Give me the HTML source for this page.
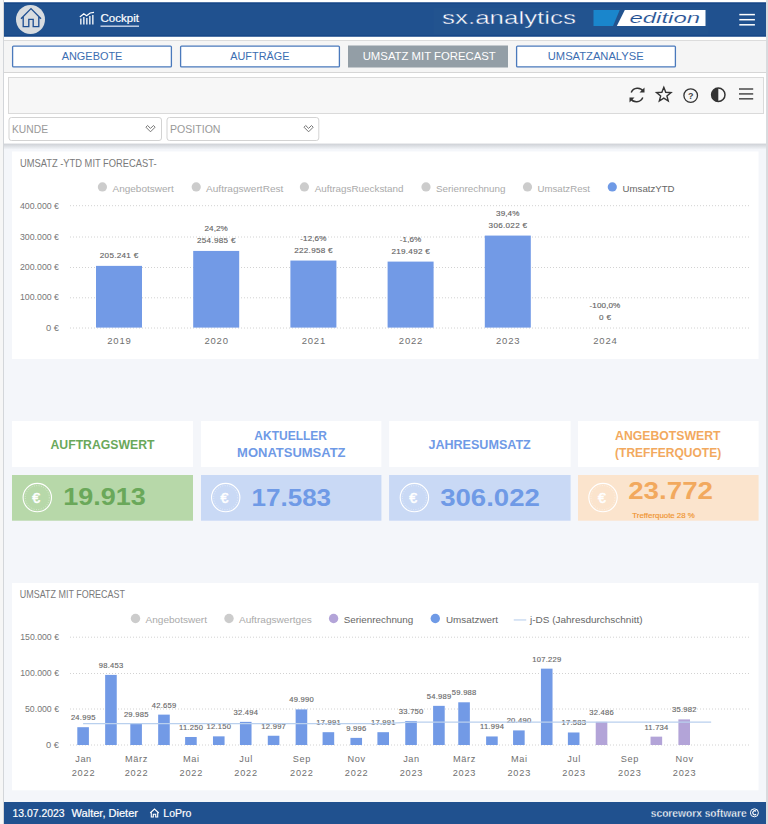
<!DOCTYPE html>
<html><head><meta charset="utf-8"><title>sx.analytics Cockpit</title>
<style>
html,body{margin:0;padding:0;background:#f6f6f6;overflow:hidden}
svg{display:block;font-family:"Liberation Sans",sans-serif}
</style></head><body>
<svg width="768" height="824" viewBox="0 0 768 824">
<rect x="0" y="0" width="768" height="824" fill="#f6f6f6"/>
<rect x="3" y="0" width="1" height="824" fill="#d3d6da"/>
<rect x="766" y="0" width="2" height="824" fill="#d9dbde"/>
<rect x="4" y="0" width="762" height="824" fill="#f4f6fa"/>
<rect x="4" y="0" width="762" height="144" fill="#ffffff"/>
<rect x="4" y="2.5" width="762" height="34" fill="#20518f"/>
<rect x="4" y="35.5" width="762" height="1" fill="#0f4084"/>
<rect x="4" y="2.5" width="762" height="1" fill="#0f4084"/>
<rect x="4" y="40" width="762" height="1" fill="#dcdcdc"/>
<rect x="4" y="41" width="762" height="31" fill="#f5f5f5"/>
<rect x="4" y="72" width="762" height="1" fill="#d6d6d6"/>
<defs><linearGradient id="sh" x1="0" y1="0" x2="0" y2="1"><stop offset="0" stop-color="#cdd0d5"/><stop offset="1" stop-color="#f4f6fa"/></linearGradient></defs>
<rect x="4" y="143.6" width="762" height="6" fill="url(#sh)"/>
<circle cx="30.5" cy="19.5" r="14.5" fill="#d8dce0"/>
<path d="M21 18.8 L31 8.6 L41 18.8 M23.2 16.8 V26.6 H28.8 V19.4 H33.2 V26.6 H38.8 V16.8" fill="none" stroke="#1f4f92" stroke-width="1.35" stroke-linejoin="miter"/>
<g fill="#ffffff"><rect x="80.2" y="18.5" width="1.3" height="6"/><rect x="83.2" y="17" width="1.3" height="7.5"/><rect x="86.2" y="18" width="1.3" height="6.5"/><rect x="89.2" y="16" width="1.3" height="8.5"/><rect x="92.2" y="15" width="1.3" height="9.5"/></g>
<path d="M79.8 17 L83.8 13.8 L86.6 15.8 L90.2 13 L94 12.3" fill="none" stroke="#fff" stroke-width="1.2"/>
<text x="100.5" y="21.5" font-size="11" fill="#ffffff" textLength="38.5" lengthAdjust="spacingAndGlyphs" stroke="#ffffff" stroke-width="0.2">Cockpit</text>
<rect x="100.5" y="25.5" width="38.5" height="1.4" fill="#c9d5ea"/>
<rect x="433.5" y="8" width="275" height="26.5" fill="#22538f"/>
<text x="442" y="24" font-size="18.6" fill="#ffffff" textLength="134" lengthAdjust="spacingAndGlyphs" stroke="#1f4f92" stroke-width="0.35">sx.analytics</text>
<path d="M593.5 10 H619.7 L613 26 H593.5 Z" fill="#1a86cc"/>
<path d="M624.8 10 H705.5 V26 H616.8 Z" fill="#ffffff"/>
<text x="629.5" y="23" font-size="15.5" fill="#1f4f92" font-style="italic" textLength="70.5" lengthAdjust="spacingAndGlyphs" stroke="#ffffff" stroke-width="0.15">edition</text>
<rect x="739.3" y="13.85" width="15.6" height="1.5" fill="#ffffff"/>
<rect x="739.3" y="18.95" width="15.6" height="1.5" fill="#ffffff"/>
<rect x="739.3" y="24.05" width="15.6" height="1.5" fill="#ffffff"/>
<rect x="12.6" y="46.1" width="158.8" height="20.8" fill="#ffffff" stroke="#4a79bc" stroke-width="1.3" rx="1"/>
<text x="61.7" y="59.7" font-size="11.6" fill="#3b6db1" textLength="60.7" lengthAdjust="spacingAndGlyphs">ANGEBOTE</text>
<rect x="180.6" y="46.1" width="158.8" height="20.8" fill="#ffffff" stroke="#4a79bc" stroke-width="1.3" rx="1"/>
<text x="230.3" y="59.7" font-size="11.6" fill="#3b6db1" textLength="59.1" lengthAdjust="spacingAndGlyphs">AUFTRÄGE</text>
<rect x="348" y="45.5" width="160" height="22" fill="#939ea6"/>
<text x="362.7" y="59.7" font-size="11.6" fill="#ffffff" textLength="133.1" lengthAdjust="spacingAndGlyphs">UMSATZ MIT FORECAST</text>
<rect x="516.6" y="46.1" width="158.8" height="20.8" fill="#ffffff" stroke="#4a79bc" stroke-width="1.3" rx="1"/>
<text x="547.8" y="59.7" font-size="11.6" fill="#3b6db1" textLength="95.8" lengthAdjust="spacingAndGlyphs">UMSATZANALYSE</text>
<rect x="8.5" y="77.5" width="755" height="36" fill="#f7f7f7" stroke="#dadada" stroke-width="1"/>
<g fill="none" stroke="#333333" stroke-width="1.5"><path d="M643.5 91.5 A7 7 0 0 0 631.2 92.5"/><path d="M630.5 98.5 A7 7 0 0 0 642.8 97.5"/></g><path d="M644.5 87.5 V92.5 H639.5 Z" fill="#333333"/><path d="M629.5 102.5 V97.5 H634.5 Z" fill="#333333"/>
<polygon points="663.80,87.30 665.74,92.23 671.03,92.55 666.94,95.92 668.27,101.05 663.80,98.20 659.33,101.05 660.66,95.92 656.57,92.55 661.86,92.23" fill="none" stroke="#333333" stroke-width="1.4" stroke-linejoin="miter"/>
<circle cx="690.7" cy="95.6" r="6.8" fill="none" stroke="#333333" stroke-width="1.3"/>
<text x="690.8" y="98.9" font-size="9" fill="#444444" font-weight="bold" text-anchor="middle">?</text>
<circle cx="718.3" cy="94.8" r="6.7" fill="none" stroke="#333333" stroke-width="1.5"/>
<path d="M718.3 88.1 A6.7 6.7 0 0 0 718.3 101.5 Z" fill="#333333"/>
<rect x="739" y="88.2" width="14.2" height="1.6" fill="#555555"/>
<rect x="739" y="93.10000000000001" width="14.2" height="1.6" fill="#555555"/>
<rect x="739" y="98.0" width="14.2" height="1.6" fill="#555555"/>
<rect x="9.0" y="117.5" width="152.5" height="23" fill="#ffffff" stroke="#d3d3d3" stroke-width="1" rx="2.5"/>
<text x="12.0" y="132.6" font-size="10.4" fill="#999999" textLength="36" lengthAdjust="spacingAndGlyphs">KUNDE</text>
<path d="M145.9 127.2 L147.6 125.5 L150.5 128.4 L153.4 125.5 L155.1 127.2 L150.5 131.8 Z" fill="#fff" stroke="#666" stroke-width="0.9" stroke-linejoin="miter"/>
<rect x="167.0" y="117.5" width="151.8" height="23" fill="#ffffff" stroke="#d3d3d3" stroke-width="1" rx="2.5"/>
<text x="170.0" y="132.6" font-size="10.4" fill="#999999" textLength="50.5" lengthAdjust="spacingAndGlyphs">POSITION</text>
<path d="M304.0 127.2 L305.7 125.5 L308.59999999999997 128.4 L311.5 125.5 L313.2 127.2 L308.59999999999997 131.8 Z" fill="#fff" stroke="#666" stroke-width="0.9" stroke-linejoin="miter"/>
<rect x="12" y="151.5" width="746.5" height="207.5" fill="#ffffff"/>
<text x="20" y="166.9" font-size="10.3" fill="#7a7a7a" textLength="136.5" lengthAdjust="spacingAndGlyphs">UMSATZ -YTD MIT FORECAST-</text>
<circle cx="102.4" cy="186.9" r="4.6" fill="#cccccc"/>
<text x="112.5" y="191.7" font-size="9.8" fill="#aaaaaa" textLength="61.2" lengthAdjust="spacingAndGlyphs">Angebotswert</text>
<circle cx="196.2" cy="186.9" r="4.6" fill="#cccccc"/>
<text x="206" y="191.7" font-size="9.8" fill="#aaaaaa" textLength="77.4" lengthAdjust="spacingAndGlyphs">AuftragswertRest</text>
<circle cx="304.4" cy="186.9" r="4.6" fill="#cccccc"/>
<text x="314.8" y="191.7" font-size="9.8" fill="#aaaaaa" textLength="88.7" lengthAdjust="spacingAndGlyphs">AuftragsRueckstand</text>
<circle cx="426" cy="186.9" r="4.6" fill="#cccccc"/>
<text x="436" y="191.7" font-size="9.8" fill="#aaaaaa" textLength="69.5" lengthAdjust="spacingAndGlyphs">Serienrechnung</text>
<circle cx="527.5" cy="186.9" r="4.6" fill="#cccccc"/>
<text x="537.5" y="191.7" font-size="9.8" fill="#aaaaaa" textLength="52.5" lengthAdjust="spacingAndGlyphs">UmsatzRest</text>
<circle cx="612.3" cy="186.9" r="4.6" fill="#6f9ae6"/>
<text x="622.6" y="191.7" font-size="9.8" fill="#666666" textLength="52.0" lengthAdjust="spacingAndGlyphs">UmsatzYTD</text>
<line x1="70" y1="205.7" x2="750.5" y2="205.7" stroke="#d2d2d2" stroke-width="1" stroke-dasharray="1 2"/>
<line x1="70" y1="237.0" x2="750.5" y2="237.0" stroke="#d2d2d2" stroke-width="1" stroke-dasharray="1 2"/>
<line x1="70" y1="267.5" x2="750.5" y2="267.5" stroke="#d2d2d2" stroke-width="1" stroke-dasharray="1 2"/>
<line x1="70" y1="297.8" x2="750.5" y2="297.8" stroke="#d2d2d2" stroke-width="1" stroke-dasharray="1 2"/>
<line x1="70" y1="328.0" x2="750.5" y2="328.0" stroke="#d2d2d2" stroke-width="1" stroke-dasharray="1 2"/>
<text x="59" y="209" font-size="8.8" fill="#777777" text-anchor="end" textLength="39" lengthAdjust="spacingAndGlyphs">400.000 €</text>
<text x="59" y="239.5" font-size="8.8" fill="#777777" text-anchor="end" textLength="39" lengthAdjust="spacingAndGlyphs">300.000 €</text>
<text x="59" y="270" font-size="8.8" fill="#777777" text-anchor="end" textLength="39" lengthAdjust="spacingAndGlyphs">200.000 €</text>
<text x="59" y="300.3" font-size="8.8" fill="#777777" text-anchor="end" textLength="39" lengthAdjust="spacingAndGlyphs">100.000 €</text>
<text x="59" y="330.8" font-size="8.8" fill="#777777" text-anchor="end" textLength="13" lengthAdjust="spacingAndGlyphs">0 €</text>
<rect x="96.0" y="265.88" width="46" height="61.72" fill="#729ae6"/>
<text x="119.15" y="258.1" font-size="8.1" fill="#666666" text-anchor="middle" letter-spacing="0.3" stroke="#666666" stroke-width="0.15">205.241 €</text>
<text x="119.4" y="343.8" font-size="9.5" fill="#707070" text-anchor="middle" letter-spacing="0.8">2019</text>
<rect x="193.2" y="250.93" width="46" height="76.67" fill="#729ae6"/>
<text x="216.35" y="243.1" font-size="8.1" fill="#666666" text-anchor="middle" letter-spacing="0.3" stroke="#666666" stroke-width="0.15">254.985 €</text>
<text x="216.2" y="231.1" font-size="8.1" fill="#666666" text-anchor="middle" letter-spacing="0.1" stroke="#666666" stroke-width="0.15">24,2%</text>
<text x="216.6" y="343.8" font-size="9.5" fill="#707070" text-anchor="middle" letter-spacing="0.8">2020</text>
<rect x="290.4" y="260.56" width="46" height="67.04" fill="#729ae6"/>
<text x="313.55" y="252.8" font-size="8.1" fill="#666666" text-anchor="middle" letter-spacing="0.3" stroke="#666666" stroke-width="0.15">222.958 €</text>
<text x="313.4" y="240.8" font-size="8.1" fill="#666666" text-anchor="middle" letter-spacing="0.1" stroke="#666666" stroke-width="0.15">-12,6%</text>
<text x="313.8" y="343.8" font-size="9.5" fill="#707070" text-anchor="middle" letter-spacing="0.8">2021</text>
<rect x="387.6" y="261.6" width="46" height="66.0" fill="#729ae6"/>
<text x="410.75" y="253.8" font-size="8.1" fill="#666666" text-anchor="middle" letter-spacing="0.3" stroke="#666666" stroke-width="0.15">219.492 €</text>
<text x="410.6" y="241.8" font-size="8.1" fill="#666666" text-anchor="middle" letter-spacing="0.1" stroke="#666666" stroke-width="0.15">-1,6%</text>
<text x="411.0" y="343.8" font-size="9.5" fill="#707070" text-anchor="middle" letter-spacing="0.8">2022</text>
<rect x="484.8" y="235.58" width="46" height="92.02" fill="#729ae6"/>
<text x="507.95" y="227.8" font-size="8.1" fill="#666666" text-anchor="middle" letter-spacing="0.3" stroke="#666666" stroke-width="0.15">306.022 €</text>
<text x="507.8" y="215.8" font-size="8.1" fill="#666666" text-anchor="middle" letter-spacing="0.1" stroke="#666666" stroke-width="0.15">39,4%</text>
<text x="508.2" y="343.8" font-size="9.5" fill="#707070" text-anchor="middle" letter-spacing="0.8">2023</text>
<text x="605.15" y="319.8" font-size="8.1" fill="#666666" text-anchor="middle" letter-spacing="0.3" stroke="#666666" stroke-width="0.15">0 €</text>
<text x="605.0" y="307.8" font-size="8.1" fill="#666666" text-anchor="middle" letter-spacing="0.1" stroke="#666666" stroke-width="0.15">-100,0%</text>
<text x="605.4" y="343.8" font-size="9.5" fill="#707070" text-anchor="middle" letter-spacing="0.8">2024</text>
<rect x="12" y="421" width="181" height="46" fill="#ffffff"/>
<rect x="12" y="475" width="181" height="45.7" fill="#b7d8a9"/>
<text x="50.5" y="448.5" font-size="12.4" fill="#6aa85a" font-weight="bold" textLength="104.0" lengthAdjust="spacingAndGlyphs">AUFTRAGSWERT</text>
<text x="63.3" y="505" font-size="24.3" fill="#6aa85a" font-weight="bold" textLength="82.5" lengthAdjust="spacingAndGlyphs">19.913</text>
<circle cx="37.3" cy="497.6" r="14.2" fill="none" stroke="#ffffff" stroke-width="1.1"/>
<circle cx="37.3" cy="497.6" r="12" fill="none" stroke="#ffffff" stroke-width="0.6" stroke-dasharray="0.8 1.6" opacity="0.8"/>
<text x="36.099999999999994" y="502.6" font-size="14" fill="#ffffff" text-anchor="middle" stroke="#ffffff" stroke-width="0.6">€</text>
<rect x="201" y="421" width="180.39999999999998" height="46" fill="#ffffff"/>
<rect x="201" y="475" width="180.39999999999998" height="45.7" fill="#c9d9f5"/>
<text x="254.29999999999998" y="440.2" font-size="12.4" fill="#6f9ae6" font-weight="bold" textLength="72.7" lengthAdjust="spacingAndGlyphs">AKTUELLER</text>
<text x="237.1" y="457.1" font-size="12.4" fill="#6f9ae6" font-weight="bold" textLength="108.4" lengthAdjust="spacingAndGlyphs">MONATSUMSATZ</text>
<text x="251.5" y="505.5" font-size="24.3" fill="#6f9ae6" font-weight="bold" textLength="79.6" lengthAdjust="spacingAndGlyphs">17.583</text>
<circle cx="225.7" cy="497.6" r="14.2" fill="none" stroke="#ffffff" stroke-width="1.1"/>
<circle cx="225.7" cy="497.6" r="12" fill="none" stroke="#ffffff" stroke-width="0.6" stroke-dasharray="0.8 1.6" opacity="0.8"/>
<text x="224.5" y="502.6" font-size="14" fill="#ffffff" text-anchor="middle" stroke="#ffffff" stroke-width="0.6">€</text>
<rect x="389.1" y="421" width="181.5" height="46" fill="#ffffff"/>
<rect x="389.1" y="475" width="181.5" height="45.7" fill="#c9d9f5"/>
<text x="428.4" y="448.5" font-size="12.4" fill="#6f9ae6" font-weight="bold" textLength="102.4" lengthAdjust="spacingAndGlyphs">JAHRESUMSATZ</text>
<text x="440.2" y="505.5" font-size="24.3" fill="#6f9ae6" font-weight="bold" textLength="99.7" lengthAdjust="spacingAndGlyphs">306.022</text>
<circle cx="414.4" cy="497.6" r="14.2" fill="none" stroke="#ffffff" stroke-width="1.1"/>
<circle cx="414.4" cy="497.6" r="12" fill="none" stroke="#ffffff" stroke-width="0.6" stroke-dasharray="0.8 1.6" opacity="0.8"/>
<text x="413.2" y="502.6" font-size="14" fill="#ffffff" text-anchor="middle" stroke="#ffffff" stroke-width="0.6">€</text>
<rect x="578" y="421" width="180.60000000000002" height="46" fill="#ffffff"/>
<rect x="578" y="475" width="180.60000000000002" height="45.7" fill="#fbe4cd"/>
<text x="615.1" y="440.2" font-size="12.4" fill="#f2a95e" font-weight="bold" textLength="105.5" lengthAdjust="spacingAndGlyphs">ANGEBOTSWERT</text>
<text x="615.1" y="457.1" font-size="12.4" fill="#f2a95e" font-weight="bold" textLength="106.1" lengthAdjust="spacingAndGlyphs">(TREFFERQUOTE)</text>
<text x="628.2" y="498.5" font-size="24.3" fill="#f2a95e" font-weight="bold" textLength="84.8" lengthAdjust="spacingAndGlyphs">23.772</text>
<circle cx="603" cy="497.6" r="14.2" fill="none" stroke="#ffffff" stroke-width="1.1"/>
<circle cx="603" cy="497.6" r="12" fill="none" stroke="#ffffff" stroke-width="0.6" stroke-dasharray="0.8 1.6" opacity="0.8"/>
<text x="601.8" y="502.6" font-size="14" fill="#ffffff" text-anchor="middle" stroke="#ffffff" stroke-width="0.6">€</text>
<text x="632.3" y="517.5" font-size="7.3" fill="#f0942f" textLength="62.5" lengthAdjust="spacingAndGlyphs" stroke="#f0942f" stroke-width="0.15">Trefferquote 28 %</text>
<rect x="12" y="583" width="746.5" height="207.3" fill="#ffffff"/>
<text x="19.8" y="598.1" font-size="10.3" fill="#7a7a7a" textLength="105.2" lengthAdjust="spacingAndGlyphs">UMSATZ MIT FORECAST</text>
<circle cx="135.5" cy="618.5" r="4.7" fill="#cccccc"/>
<text x="145.5" y="623" font-size="9.8" fill="#aaaaaa" textLength="61.5" lengthAdjust="spacingAndGlyphs">Angebotswert</text>
<circle cx="229" cy="618.5" r="4.7" fill="#cccccc"/>
<text x="239" y="623" font-size="9.8" fill="#aaaaaa" textLength="72.8" lengthAdjust="spacingAndGlyphs">Auftragswertges</text>
<circle cx="333.6" cy="618.5" r="4.7" fill="#b3a4d8"/>
<text x="343.8" y="623" font-size="9.8" fill="#666666" textLength="69.5" lengthAdjust="spacingAndGlyphs">Serienrechnung</text>
<circle cx="435.3" cy="618.5" r="4.7" fill="#6f9ae6"/>
<text x="446" y="623" font-size="9.8" fill="#666666" textLength="52" lengthAdjust="spacingAndGlyphs">Umsatzwert</text>
<rect x="513.75" y="619.3" width="12.5" height="1.3" fill="#c5d8f0"/>
<text x="530" y="623" font-size="9.8" fill="#666666" textLength="112.5" lengthAdjust="spacingAndGlyphs">j-DS (Jahresdurchschnitt)</text>
<line x1="70" y1="637.2" x2="749" y2="637.2" stroke="#d2d2d2" stroke-width="1" stroke-dasharray="1 2"/>
<line x1="70" y1="673.5" x2="749" y2="673.5" stroke="#d2d2d2" stroke-width="1" stroke-dasharray="1 2"/>
<line x1="70" y1="709.0" x2="749" y2="709.0" stroke="#d2d2d2" stroke-width="1" stroke-dasharray="1 2"/>
<line x1="70" y1="745.0" x2="749" y2="745.0" stroke="#d2d2d2" stroke-width="1" stroke-dasharray="1 2"/>
<text x="59" y="640.2" font-size="8.8" fill="#777777" text-anchor="end" textLength="38.8" lengthAdjust="spacingAndGlyphs">150.000 €</text>
<text x="59" y="676" font-size="8.8" fill="#777777" text-anchor="end" textLength="38.8" lengthAdjust="spacingAndGlyphs">100.000 €</text>
<text x="59" y="711.8" font-size="8.8" fill="#777777" text-anchor="end" textLength="34" lengthAdjust="spacingAndGlyphs">50.000 €</text>
<text x="59" y="747.5" font-size="8.8" fill="#777777" text-anchor="end" textLength="13" lengthAdjust="spacingAndGlyphs">0 €</text>
<rect x="77.3" y="727.2" width="11.6" height="17.8" fill="#729ae6"/>
<text x="83.25" y="720.2" font-size="7.6" fill="#6a6a6a" text-anchor="middle" letter-spacing="0.25" stroke="#6a6a6a" stroke-width="0.15">24.995</text>
<rect x="105.15" y="674.9" width="11.6" height="70.1" fill="#729ae6"/>
<text x="111.1" y="667.9" font-size="7.6" fill="#6a6a6a" text-anchor="middle" letter-spacing="0.25" stroke="#6a6a6a" stroke-width="0.15">98.453</text>
<rect x="130.31" y="723.65" width="11.6" height="21.35" fill="#729ae6"/>
<text x="136.26" y="716.65" font-size="7.6" fill="#6a6a6a" text-anchor="middle" letter-spacing="0.25" stroke="#6a6a6a" stroke-width="0.15">29.985</text>
<rect x="158.16" y="714.63" width="11.6" height="30.37" fill="#729ae6"/>
<text x="164.11" y="707.63" font-size="7.6" fill="#6a6a6a" text-anchor="middle" letter-spacing="0.25" stroke="#6a6a6a" stroke-width="0.15">42.659</text>
<rect x="185.12" y="736.99" width="11.6" height="8.01" fill="#729ae6"/>
<text x="191.07" y="729.99" font-size="7.6" fill="#6a6a6a" text-anchor="middle" letter-spacing="0.25" stroke="#6a6a6a" stroke-width="0.15">11.250</text>
<rect x="212.97" y="736.35" width="11.6" height="8.65" fill="#729ae6"/>
<text x="218.92" y="729.35" font-size="7.6" fill="#6a6a6a" text-anchor="middle" letter-spacing="0.25" stroke="#6a6a6a" stroke-width="0.15">12.150</text>
<rect x="239.93" y="721.86" width="11.6" height="23.14" fill="#729ae6"/>
<text x="245.88" y="714.86" font-size="7.6" fill="#6a6a6a" text-anchor="middle" letter-spacing="0.25" stroke="#6a6a6a" stroke-width="0.15">32.494</text>
<rect x="267.78" y="735.75" width="11.6" height="9.25" fill="#729ae6"/>
<text x="273.73" y="728.75" font-size="7.6" fill="#6a6a6a" text-anchor="middle" letter-spacing="0.25" stroke="#6a6a6a" stroke-width="0.15">12.997</text>
<rect x="295.64" y="709.41" width="11.6" height="35.59" fill="#729ae6"/>
<text x="301.59" y="702.41" font-size="7.6" fill="#6a6a6a" text-anchor="middle" letter-spacing="0.25" stroke="#6a6a6a" stroke-width="0.15">49.990</text>
<rect x="322.59" y="732.19" width="11.6" height="12.81" fill="#729ae6"/>
<text x="328.54" y="725.19" font-size="7.6" fill="#6a6a6a" text-anchor="middle" letter-spacing="0.25" stroke="#6a6a6a" stroke-width="0.15">17.991</text>
<rect x="350.44" y="737.88" width="11.6" height="7.12" fill="#729ae6"/>
<text x="356.39" y="730.88" font-size="7.6" fill="#6a6a6a" text-anchor="middle" letter-spacing="0.25" stroke="#6a6a6a" stroke-width="0.15">9.996</text>
<rect x="377.4" y="732.19" width="11.6" height="12.81" fill="#729ae6"/>
<text x="383.35" y="725.19" font-size="7.6" fill="#6a6a6a" text-anchor="middle" letter-spacing="0.25" stroke="#6a6a6a" stroke-width="0.15">17.991</text>
<rect x="405.25" y="720.97" width="11.6" height="24.03" fill="#729ae6"/>
<text x="411.2" y="713.97" font-size="7.6" fill="#6a6a6a" text-anchor="middle" letter-spacing="0.25" stroke="#6a6a6a" stroke-width="0.15">33.750</text>
<rect x="433.11" y="705.85" width="11.6" height="39.15" fill="#729ae6"/>
<text x="439.06" y="698.85" font-size="7.6" fill="#6a6a6a" text-anchor="middle" letter-spacing="0.25" stroke="#6a6a6a" stroke-width="0.15">54.989</text>
<rect x="458.26" y="702.29" width="11.6" height="42.71" fill="#729ae6"/>
<text x="464.21" y="695.29" font-size="7.6" fill="#6a6a6a" text-anchor="middle" letter-spacing="0.25" stroke="#6a6a6a" stroke-width="0.15">59.988</text>
<rect x="486.12" y="736.46" width="11.6" height="8.54" fill="#729ae6"/>
<text x="492.07" y="729.46" font-size="7.6" fill="#6a6a6a" text-anchor="middle" letter-spacing="0.25" stroke="#6a6a6a" stroke-width="0.15">11.994</text>
<rect x="513.07" y="730.41" width="11.6" height="14.59" fill="#729ae6"/>
<text x="519.02" y="723.41" font-size="7.6" fill="#6a6a6a" text-anchor="middle" letter-spacing="0.25" stroke="#6a6a6a" stroke-width="0.15">20.490</text>
<rect x="540.93" y="668.65" width="11.6" height="76.35" fill="#729ae6"/>
<text x="546.88" y="661.65" font-size="7.6" fill="#6a6a6a" text-anchor="middle" letter-spacing="0.25" stroke="#6a6a6a" stroke-width="0.15">107.229</text>
<rect x="567.88" y="732.48" width="11.6" height="12.52" fill="#729ae6"/>
<text x="573.83" y="725.48" font-size="7.6" fill="#6a6a6a" text-anchor="middle" letter-spacing="0.25" stroke="#6a6a6a" stroke-width="0.15">17.583</text>
<rect x="595.73" y="721.87" width="11.6" height="23.13" fill="#b3a4d8"/>
<text x="601.68" y="714.87" font-size="7.6" fill="#6a6a6a" text-anchor="middle" letter-spacing="0.25" stroke="#6a6a6a" stroke-width="0.15">32.486</text>
<rect x="650.54" y="736.65" width="11.6" height="8.35" fill="#b3a4d8"/>
<text x="656.49" y="729.65" font-size="7.6" fill="#6a6a6a" text-anchor="middle" letter-spacing="0.25" stroke="#6a6a6a" stroke-width="0.15">11.734</text>
<rect x="678.4" y="719.38" width="11.6" height="25.62" fill="#b3a4d8"/>
<text x="684.35" y="712.38" font-size="7.6" fill="#6a6a6a" text-anchor="middle" letter-spacing="0.25" stroke="#6a6a6a" stroke-width="0.15">35.982</text>
<path d="M83.10 723.58 H383.20 L411.05 722.08 H711.15" fill="none" stroke="#b9d0ee" stroke-width="1.3"/>
<text x="83.5" y="761.7" font-size="9.2" fill="#707070" text-anchor="middle" letter-spacing="0.6">Jan</text>
<text x="83.5" y="776" font-size="9.2" fill="#707070" text-anchor="middle" letter-spacing="0.8">2022</text>
<text x="136.51" y="761.7" font-size="9.2" fill="#707070" text-anchor="middle" letter-spacing="0.6">März</text>
<text x="136.51" y="776" font-size="9.2" fill="#707070" text-anchor="middle" letter-spacing="0.8">2022</text>
<text x="191.32" y="761.7" font-size="9.2" fill="#707070" text-anchor="middle" letter-spacing="0.6">Mai</text>
<text x="191.32" y="776" font-size="9.2" fill="#707070" text-anchor="middle" letter-spacing="0.8">2022</text>
<text x="246.13" y="761.7" font-size="9.2" fill="#707070" text-anchor="middle" letter-spacing="0.6">Jul</text>
<text x="246.13" y="776" font-size="9.2" fill="#707070" text-anchor="middle" letter-spacing="0.8">2022</text>
<text x="301.84" y="761.7" font-size="9.2" fill="#707070" text-anchor="middle" letter-spacing="0.6">Sep</text>
<text x="301.84" y="776" font-size="9.2" fill="#707070" text-anchor="middle" letter-spacing="0.8">2022</text>
<text x="356.64" y="761.7" font-size="9.2" fill="#707070" text-anchor="middle" letter-spacing="0.6">Nov</text>
<text x="356.64" y="776" font-size="9.2" fill="#707070" text-anchor="middle" letter-spacing="0.8">2022</text>
<text x="411.45" y="761.7" font-size="9.2" fill="#707070" text-anchor="middle" letter-spacing="0.6">Jan</text>
<text x="411.45" y="776" font-size="9.2" fill="#707070" text-anchor="middle" letter-spacing="0.8">2023</text>
<text x="464.46" y="761.7" font-size="9.2" fill="#707070" text-anchor="middle" letter-spacing="0.6">März</text>
<text x="464.46" y="776" font-size="9.2" fill="#707070" text-anchor="middle" letter-spacing="0.8">2023</text>
<text x="519.27" y="761.7" font-size="9.2" fill="#707070" text-anchor="middle" letter-spacing="0.6">Mai</text>
<text x="519.27" y="776" font-size="9.2" fill="#707070" text-anchor="middle" letter-spacing="0.8">2023</text>
<text x="574.08" y="761.7" font-size="9.2" fill="#707070" text-anchor="middle" letter-spacing="0.6">Jul</text>
<text x="574.08" y="776" font-size="9.2" fill="#707070" text-anchor="middle" letter-spacing="0.8">2023</text>
<text x="629.79" y="761.7" font-size="9.2" fill="#707070" text-anchor="middle" letter-spacing="0.6">Sep</text>
<text x="629.79" y="776" font-size="9.2" fill="#707070" text-anchor="middle" letter-spacing="0.8">2023</text>
<text x="684.6" y="761.7" font-size="9.2" fill="#707070" text-anchor="middle" letter-spacing="0.6">Nov</text>
<text x="684.6" y="776" font-size="9.2" fill="#707070" text-anchor="middle" letter-spacing="0.8">2023</text>
<rect x="4" y="802" width="762" height="22" fill="#20518f"/>
<text x="12.5" y="817.2" font-size="11" fill="#ffffff" textLength="52" lengthAdjust="spacingAndGlyphs" stroke="#ffffff" stroke-width="0.2">13.07.2023</text>
<text x="71.6" y="817.2" font-size="11" fill="#ffffff" textLength="66.4" lengthAdjust="spacingAndGlyphs" stroke="#ffffff" stroke-width="0.2">Walter, Dieter</text>
<path d="M150.2 813 L154.5 809 L158.8 813 M151.3 812 V817 H153.3 V814.3 H155.7 V817 H157.7 V812" fill="none" stroke="#fff" stroke-width="1.1"/>
<text x="163.3" y="817.2" font-size="11" fill="#ffffff" textLength="28" lengthAdjust="spacingAndGlyphs" stroke="#ffffff" stroke-width="0.2">LoPro</text>
<text x="650.8" y="817.3" font-size="10.4" fill="#ffffff" font-weight="bold" textLength="95.8" lengthAdjust="spacingAndGlyphs" stroke="#20518f" stroke-width="0.3">scoreworx software</text>
<circle cx="754.4" cy="812.8" r="4.0" fill="none" stroke="#fff" stroke-width="1.0"/>
<path d="M756.1 811.3 A2 2 0 1 0 756.1 814.3" fill="none" stroke="#fff" stroke-width="1.2"/>
</svg>
</body></html>
